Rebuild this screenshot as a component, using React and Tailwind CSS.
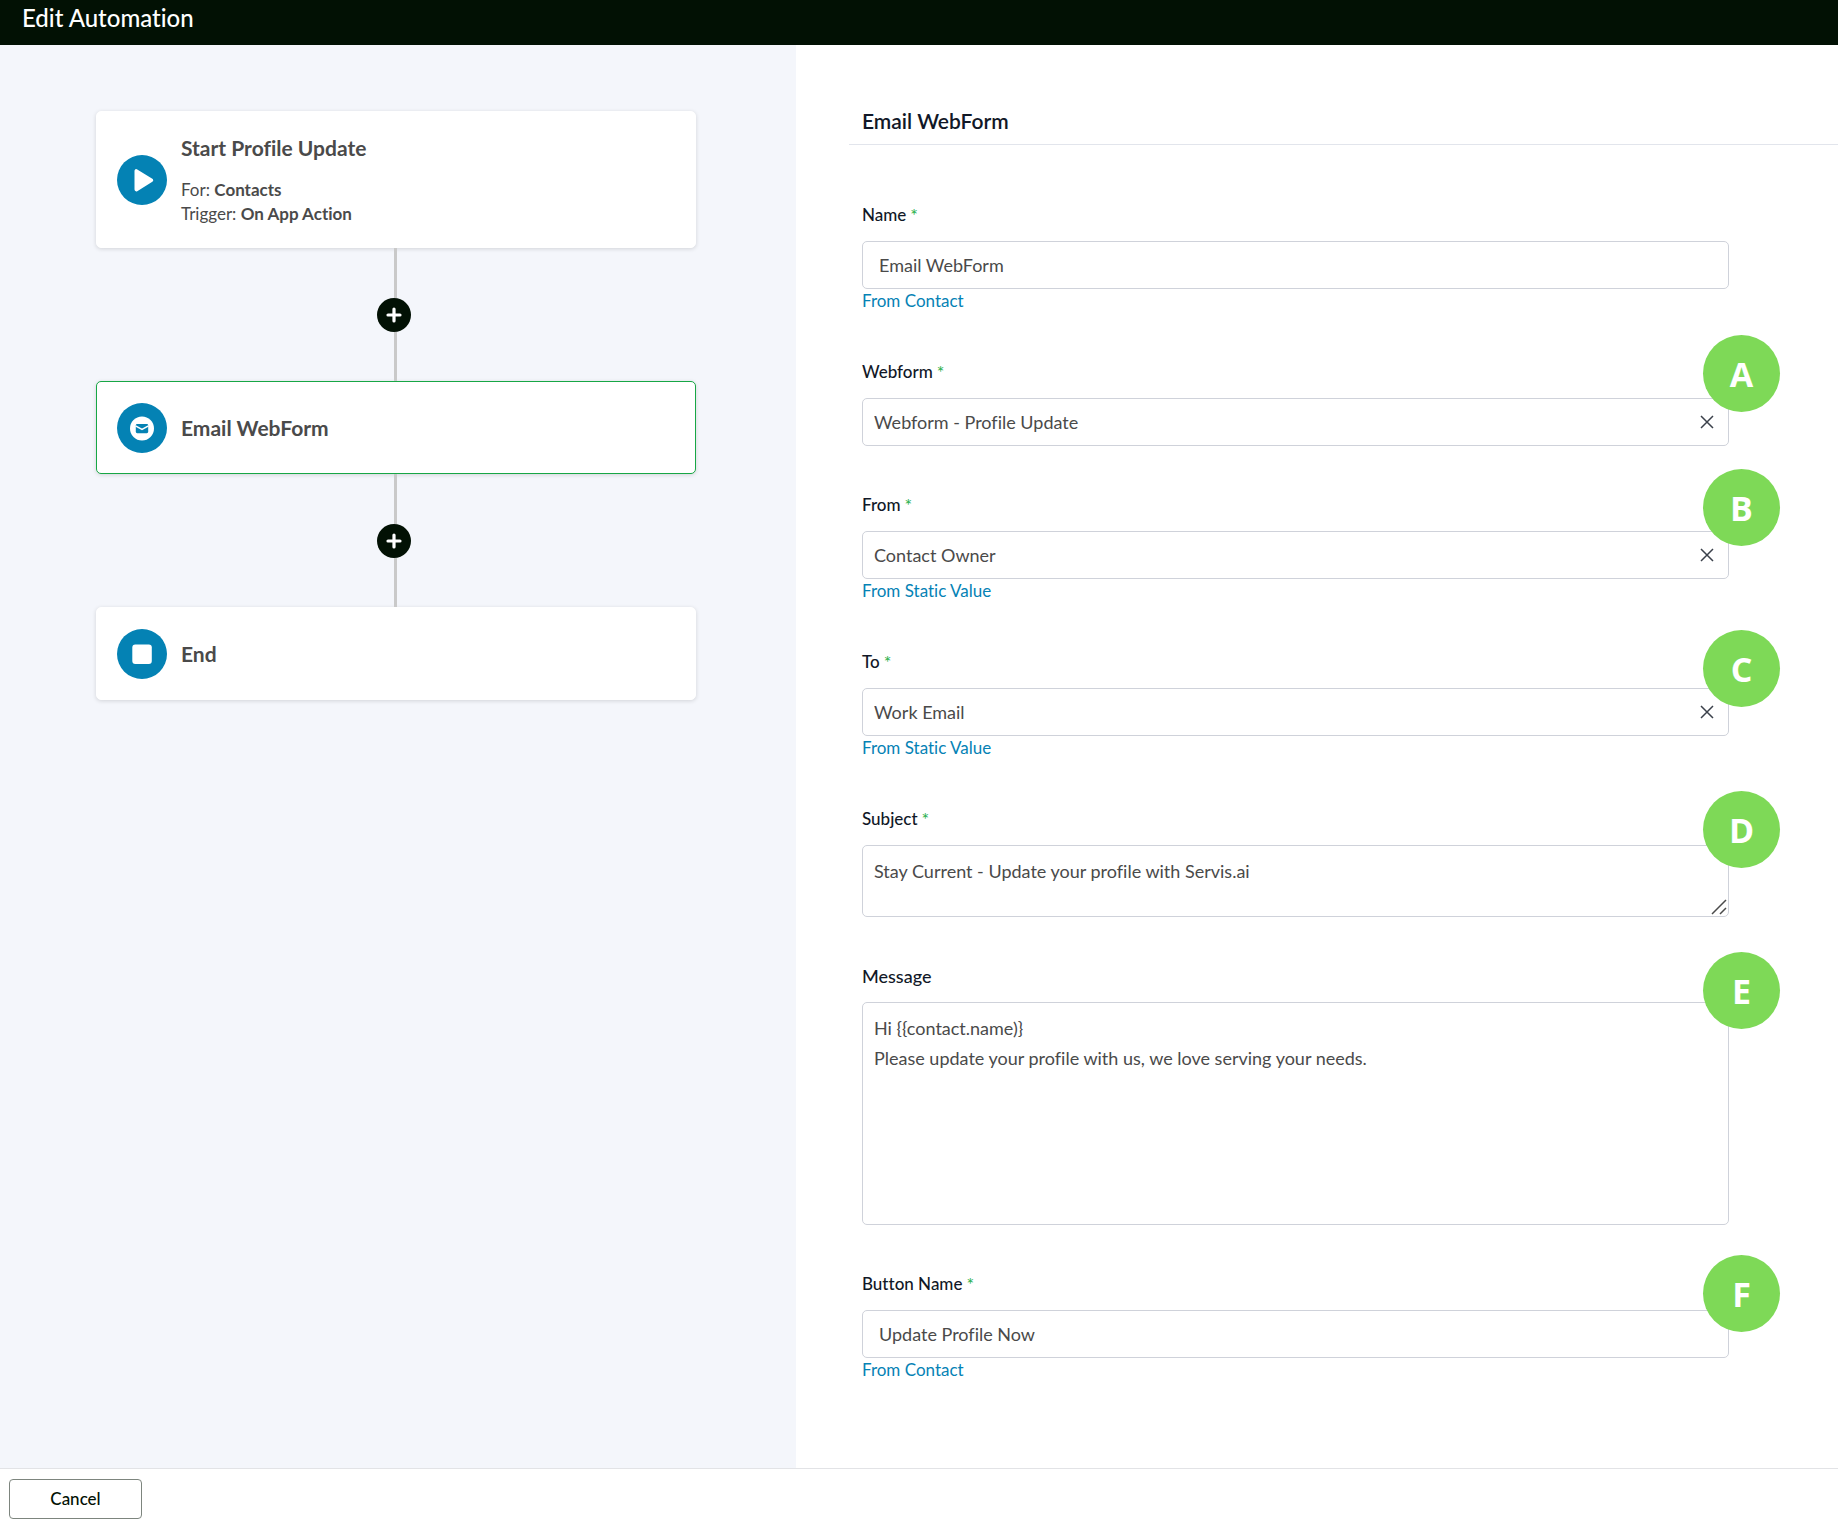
import React from "react";

const boxClass =
  "block w-full rounded-[5px] border border-[#cfd2da] bg-white text-lg text-[#4a4a4a] outline-none focus:border-[#0582b5]";

function PlayIcon() {
  return (
    <svg viewBox="0 0 50 50" className="size-[50px] shrink-0" aria-hidden="true">
      <circle cx="25" cy="25" r="25" fill="#0482b4" />
      <path
        d="M19.300 16v18.600L34.400 25.300z"
        fill="#fff"
        stroke="#fff"
        strokeWidth="3.600"
        strokeLinejoin="round"
      />
    </svg>
  );
}

function MailIcon() {
  return (
    <svg viewBox="0 0 50 50" className="size-[50px] shrink-0" aria-hidden="true">
      <circle cx="25" cy="25" r="25" fill="#0482b4" />
      <circle cx="25" cy="25.500" r="12" fill="#fff" />
      <rect x="18.800" y="21" width="12.400" height="9.200" rx="1.400" fill="#0482b4" />
      <path d="M18.500 22.800L25 26.300l6.500-3.500" fill="none" stroke="#fff" strokeWidth="1.500" />
    </svg>
  );
}

function StopIcon() {
  return (
    <svg viewBox="0 0 50 50" className="size-[50px] shrink-0" aria-hidden="true">
      <circle cx="25" cy="25" r="25" fill="#0482b4" />
      <rect x="15.300" y="15.500" width="19.500" height="19.500" rx="3" fill="#fff" />
    </svg>
  );
}

function StepCard({ icon, title, selected, children }) {
  return (
    <section
      className={`flex items-center gap-3.5 rounded-[5px] border bg-white px-5 shadow-[0_1px_4px_rgba(0,0,0,0.14)] ${
        selected ? "border-[#17a745]" : "border-white"
      } ${children ? "min-h-[137px]" : "min-h-[93px]"}`}
    >
      {icon}
      <div>
        <h2 className="text-[21px] leading-7 font-bold">{title}</h2>
        {children}
      </div>
    </section>
  );
}

function Connector() {
  return (
    <div className="mx-auto flex h-[133px] w-[38px] flex-col items-center pr-0.5">
      <span className="w-[3px] flex-1 bg-[#c9c9c9]" />
      <button
        type="button"
        aria-label="Add step"
        className="flex size-[34px] items-center justify-center self-start rounded-full bg-[#021104]"
      >
        <svg viewBox="0 0 16 16" className="size-4" aria-hidden="true">
          <path d="M8 2v12M2 8h12" stroke="#fff" strokeWidth="3.200" strokeLinecap="round" />
        </svg>
      </button>
      <span className="w-[3px] flex-1 bg-[#c9c9c9]" />
    </div>
  );
}

function Badge({ letter, className }) {
  return (
    <span
      className={`absolute -right-[51px] z-10 flex size-[77px] items-center justify-center rounded-full bg-[#7ed957] font-['Open_Sans',sans-serif] text-[34px] leading-none font-bold text-white ${className}`}
    >
      {letter}
    </span>
  );
}

function Field({ id, label, required, large, source, badge, children }) {
  return (
    <div>
      <label
        htmlFor={id}
        className={`mb-3.5 flex items-start gap-1 leading-6 font-medium text-[#111827] ${large ? "text-lg leading-6" : "text-[17px]"}`}
      >
        {label}
        {required && <span className="text-lg leading-6 font-normal text-[#28b04b]">*</span>}
      </label>
      <div className="relative">
        {children}
        {badge}
      </div>
      {source && (
        <div className="text-[17px] leading-6">
          <a href="#source" className="text-[#0582b5]">
            {source}
          </a>
        </div>
      )}
    </div>
  );
}

function PickerInput({ id, value }) {
  return (
    <>
      <input id={id} type="text" defaultValue={value} className={`${boxClass} h-12 pr-12 pl-[11px]`} />
      <button
        type="button"
        aria-label="Clear"
        className="absolute inset-y-0 right-2.5 flex w-6 items-center justify-center"
      >
        <svg viewBox="0 0 14 14" className="size-3.5" aria-hidden="true">
          <path d="M1 1l12 12M13 1L1 13" stroke="#3b414b" strokeWidth="1.500" fill="none" />
        </svg>
      </button>
    </>
  );
}

export default function App() {
  return (
    <div className="flex min-h-screen flex-col bg-white font-[Lato,sans-serif] text-[#4a4a4a] [font-variant-ligatures:none]">
      <header className="flex h-[45px] items-start bg-[#021104] px-[22px] pt-1">
        <h1 className="text-2xl leading-7 font-medium text-white">Edit Automation</h1>
      </header>

      <main className="grid flex-1 grid-cols-[796fr_1042fr]">
        <div className="bg-[#f4f6fb] pt-[66px] pr-[100px] pb-16 pl-24">
          <StepCard icon={<PlayIcon />} title="Start Profile Update">
            <div className="pt-4 text-[17px] leading-6">
              <p>
                For: <strong>Contacts</strong>
              </p>
              <p>
                Trigger: <strong>On App Action</strong>
              </p>
            </div>
          </StepCard>
          <Connector />
          <StepCard icon={<MailIcon />} title="Email WebForm" selected />
          <Connector />
          <StepCard icon={<StopIcon />} title="End" />
        </div>

        <div className="pt-[62px] pb-16 pl-[53px]">
          <h2 className="border-b border-[#e2e5ec] pb-[9px] pl-[13px] text-[21px] leading-7 font-semibold text-[#111827]">
            Email WebForm
          </h2>
          <form className="mt-[58px] mr-[109px] ml-[13px] flex flex-col gap-[47px]">
            <Field id="name" label="Name" required source="From Contact">
              <input id="name" type="text" defaultValue="Email WebForm" className={`${boxClass} h-12 px-4`} />
            </Field>
            <Field id="webform" label="Webform" required badge={<Badge letter="A" className="-top-[63px]" />}>
              <PickerInput id="webform" value="Webform - Profile Update" />
            </Field>
            <Field
              id="from"
              label="From"
              required
              source="From Static Value"
              badge={<Badge letter="B" className="-top-[62px]" />}
            >
              <PickerInput id="from" value="Contact Owner" />
            </Field>
            <Field
              id="to"
              label="To"
              required
              source="From Static Value"
              badge={<Badge letter="C" className="-top-[58px]" />}
            >
              <PickerInput id="to" value="Work Email" />
            </Field>
            <Field id="subject" label="Subject" required badge={<Badge letter="D" className="-top-[54px]" />}>
              <textarea
                id="subject"
                defaultValue="Stay Current - Update your profile with Servis.ai"
                className={`${boxClass} h-[72px] resize-none px-[11px] py-2.5 leading-[30px]`}
              />
              <svg viewBox="0 0 16 16" className="absolute right-0.5 bottom-0.5 size-4" aria-hidden="true">
                <path d="M1 15L15 1M9 15l6-6" stroke="#4b4b4b" strokeWidth="1.500" fill="none" />
              </svg>
            </Field>
            <Field id="message" label="Message" large badge={<Badge letter="E" className="-top-[50px]" />}>
              <textarea
                id="message"
                defaultValue={"Hi {{contact.name)}\nPlease update your profile with us, we love serving your needs."}
                className={`${boxClass} h-[223px] resize-none px-[11px] py-2.5 leading-[30px]`}
              />
            </Field>
            <Field
              id="button-name"
              label="Button Name"
              required
              source="From Contact"
              badge={<Badge letter="F" className="-top-[55px]" />}
            >
              <input
                id="button-name"
                type="text"
                defaultValue="Update Profile Now"
                className={`${boxClass} h-12 px-4`}
              />
            </Field>
          </form>
        </div>
      </main>

      <footer className="flex h-[58px] items-start border-t border-[#e2e3e6] px-[9px] pt-2.5">
        <button
          type="button"
          className="h-10 w-[133px] rounded border border-[#7d857e] bg-white text-[17px] font-medium text-[#021104]"
        >
          Cancel
        </button>
      </footer>
    </div>
  );
}
